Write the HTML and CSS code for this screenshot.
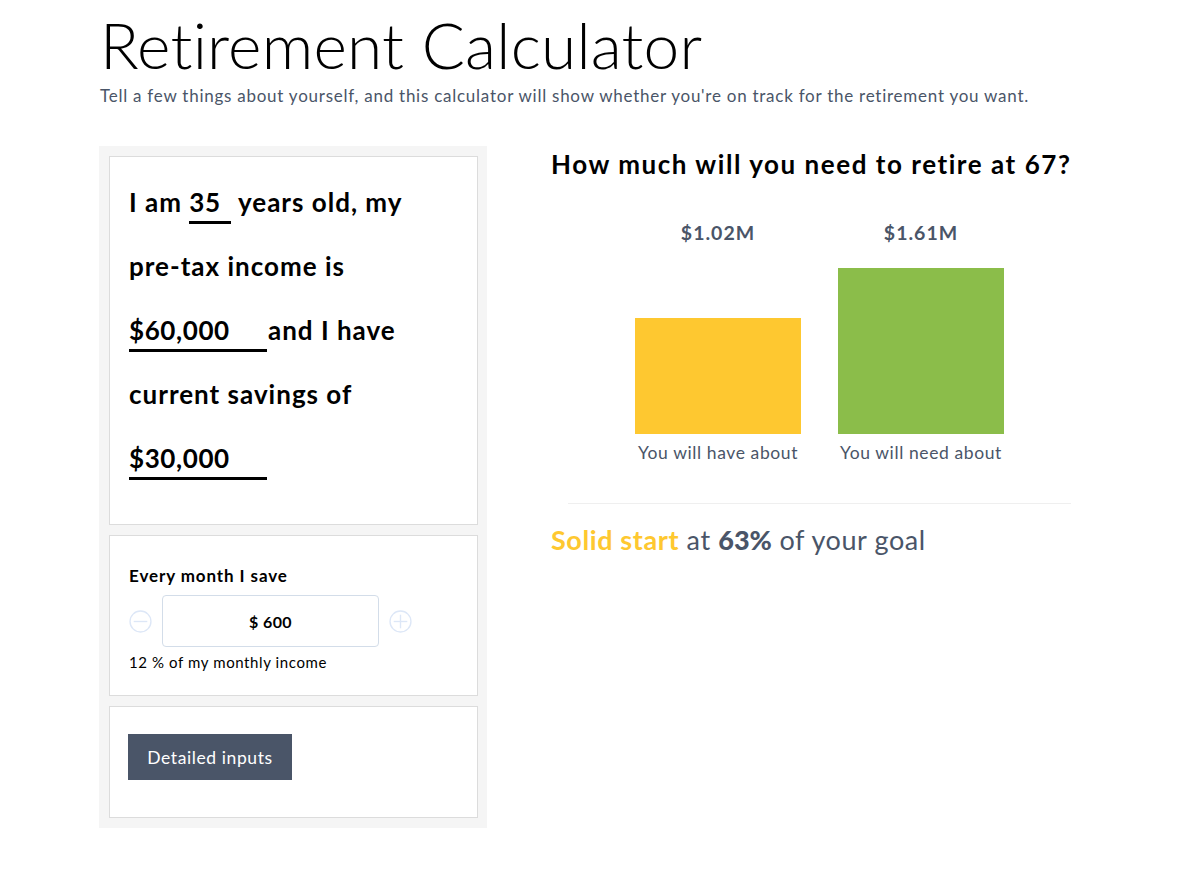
FILE: index.html
```html
<!DOCTYPE html>
<html lang="en">
<head>
<meta charset="utf-8">
<title>Retirement Calculator</title>
<link rel="stylesheet" href="styles.css">
</head>
<body>
<div class="page">
  <header class="intro">
    <h1 class="title">Retirement Calculator</h1>
    <p class="subtitle">Tell a few things about yourself, and this calculator will show whether you're on track for the retirement you want.</p>
  </header>
  <main class="layout">
    <section class="inputs">
      <div class="card card-story">
        <p class="story">I am <span class="field field-age">35</span> years old, my <span class="nowrap">pre-tax</span> income is <span class="field field-money">$60,000</span><span class="after-field">and I have</span> current savings of <span class="field field-money">$30,000</span></p>
      </div>
      <div class="card card-save">
        <div class="save-label">Every month I save</div>
        <div class="stepper">
          <svg class="step-icon" viewBox="0 0 22 22" aria-hidden="true"><circle cx="11" cy="11" r="10" fill="none" stroke="#dde7f7" stroke-width="1.3"/><line x1="4.5" y1="11" x2="17.5" y2="11" stroke="#dde7f7" stroke-width="1.3"/></svg>
          <div class="amount">$ 600</div>
          <svg class="step-icon" viewBox="0 0 22 22" aria-hidden="true"><circle cx="11" cy="11" r="10" fill="none" stroke="#dde7f7" stroke-width="1.3"/><line x1="4.5" y1="11" x2="17.5" y2="11" stroke="#dde7f7" stroke-width="1.3"/><line x1="11" y1="4.5" x2="11" y2="17.5" stroke="#dde7f7" stroke-width="1.3"/></svg>
        </div>
        <div class="save-note">12 % of my monthly income</div>
      </div>
      <div class="card card-more">
        <button class="btn" type="button">Detailed inputs</button>
      </div>
    </section>
    <section class="results">
      <h2 class="question">How much will you need to retire at 67?</h2>
      <div class="chart">
        <div class="col">
          <div class="value">$1.02M</div>
          <div class="bar-area"><div class="bar bar-have" style="height:116px"></div></div>
          <div class="caption">You will have about</div>
        </div>
        <div class="col">
          <div class="value">$1.61M</div>
          <div class="bar-area"><div class="bar bar-need" style="height:166px"></div></div>
          <div class="caption">You will need about</div>
        </div>
      </div>
      <hr class="divider">
      <p class="verdict"><span class="verdict-tag">Solid start</span> at <strong class="verdict-pct">63%</strong> of your goal</p>
    </section>
  </main>
</div>
</body>
</html>
```

FILE: styles.css
```css
* { box-sizing: border-box; }

body {
  margin: 0;
  background: #fff;
  font-family: Lato, "Noto Sans", "Liberation Sans", sans-serif;
  color: #000;
}

.page {
  width: 1000px;
  margin: 0 0 0 99px;
}

.intro {
  padding-left: 1px;
}

.title {
  margin: 0;
  padding-top: 9px;
  font-size: 64px;
  line-height: 72px;
  font-weight: 300;
  letter-spacing: 0.2px;
  color: #000;
}

.subtitle {
  margin: 4px 0 0;
  font-size: 17px;
  line-height: 22px;
  font-weight: 400;
  letter-spacing: 0.75px;
  color: #4a5568;
}

.layout {
  display: flex;
  gap: 64px;
  margin-top: 39px;
  align-items: flex-start;
}

.inputs {
  width: 388px;
  flex: none;
  background: #f5f5f5;
  padding: 10px 9px 10px 10px;
  display: flex;
  flex-direction: column;
  gap: 10px;
}

.card {
  background: #fff;
  border: 1px solid #dcdcdc;
}

.card-story {
  height: 369px;
  padding: 13px 19px 0 19px;
}

.story {
  margin: 0;
  font-size: 26px;
  line-height: 64px;
  font-weight: 700;
  letter-spacing: 1px;
}

.nowrap { white-space: nowrap; }

.after-field { margin-left: 1px; }

.field {
  display: inline-block;
  border-bottom: 3px solid #000;
  line-height: 30px;
  vertical-align: baseline;
  padding-bottom: 4px;
  letter-spacing: 0.6px;
  white-space: nowrap;
}

.field-age { width: 42px; }
.field-money { width: 138px; }

.card-save {
  height: 161px;
  padding: 29px 19px 0 19px;
}

.save-label {
  font-size: 17px;
  font-weight: 700;
  line-height: 22px;
  letter-spacing: 0.9px;
}

.stepper {
  display: flex;
  align-items: center;
  gap: 10px;
  margin-top: 8px;
}

.step-icon {
  width: 23px;
  height: 23px;
  flex: none;
}

.amount {
  width: 217px;
  height: 52px;
  border: 1px solid #d3dde9;
  border-radius: 4px;
  display: flex;
  align-items: center;
  justify-content: center;
  font-size: 16px;
  font-weight: 700;
  letter-spacing: 0.4px;
}

.save-note {
  margin-top: 5px;
  font-size: 15px;
  line-height: 20px;
  font-weight: 400;
  letter-spacing: 0.6px;
}

.card-more {
  height: 112px;
  padding: 27px 18px 0 18px;
}

.btn {
  width: 164px;
  height: 46px;
  border: 0;
  border-radius: 0;
  background: #4a5568;
  color: #fff;
  font-family: inherit;
  font-size: 17.5px;
  font-weight: 400;
  letter-spacing: 0.6px;
  padding: 0;
}

.results {
  flex: 1;
}

.question {
  margin: 0;
  padding-top: 2px;
  font-size: 26px;
  line-height: 32px;
  font-weight: 700;
  letter-spacing: 1.55px;
}

.chart {
  display: flex;
  gap: 37px;
  padding-left: 84px;
  margin-top: 40px;
}

.col {
  width: 166px;
  display: flex;
  flex-direction: column;
  align-items: center;
}

.value {
  font-size: 19.5px;
  line-height: 26px;
  font-weight: 700;
  letter-spacing: 1px;
  color: #4a5568;
}

.bar-area {
  width: 100%;
  height: 188px;
  display: flex;
  align-items: flex-end;
}

.bar { width: 100%; }
.bar-have { background: #fec830; }
.bar-need { background: #8bbd4a; }

.caption {
  margin-top: 8px;
  font-size: 17.5px;
  line-height: 22px;
  font-weight: 400;
  letter-spacing: 0.6px;
  color: #4a5568;
  white-space: nowrap;
}

.divider {
  border: 0;
  border-top: 1px solid #efefef;
  margin: 39px 28px 0 17px;
}

.verdict {
  margin: 19px 0 0;
  font-size: 27px;
  line-height: 34px;
  font-weight: 400;
  letter-spacing: 0.6px;
  color: #4a5568;
}

.verdict-tag {
  color: #fec830;
  font-weight: 700;
}

.verdict-pct {
  font-weight: 900;
  letter-spacing: 0;
}
```
